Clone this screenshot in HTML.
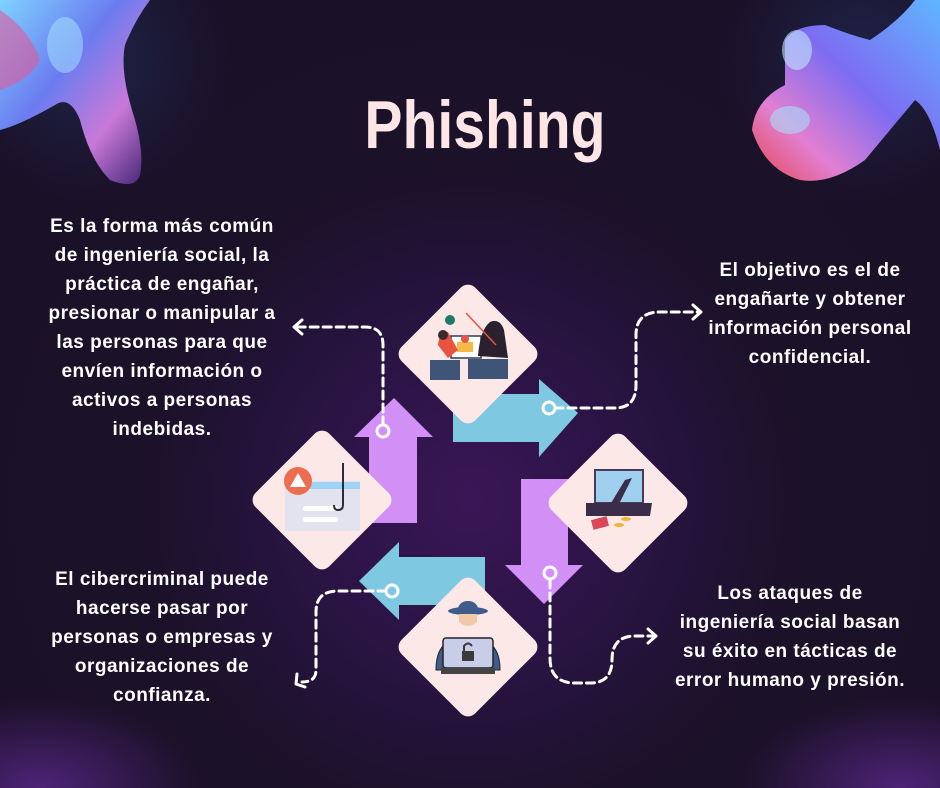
<!DOCTYPE html>
<html style="width:940px;height:788px;overflow:hidden"><head><meta charset="utf-8"><style>
html,body{margin:0;padding:0}
body{width:940px;height:788px;overflow:hidden;position:relative;font-family:"Liberation Sans",sans-serif;
background:
radial-gradient(ellipse 160px 90px at 40px 788px,rgba(90,40,140,.8),rgba(90,40,140,0)),
radial-gradient(ellipse 160px 90px at 900px 788px,rgba(90,40,140,.8),rgba(90,40,140,0)),
radial-gradient(circle 140px at 90px 60px,rgba(31,43,85,.7),rgba(31,43,85,0)),
radial-gradient(circle 140px at 860px 60px,rgba(31,43,85,.7),rgba(31,43,85,0)),
radial-gradient(circle at 470px 500px,#3a1656 0,#2a1444 160px,#1b1128 330px,#1a1027 100%);}
.t{position:absolute;color:#fff;font-weight:bold;font-size:19px;letter-spacing:0.5px;line-height:29px;text-align:center;white-space:nowrap}
h1{position:absolute;left:0;width:970px;top:86px;margin:0;text-align:center;color:#ffe6e6;font-size:68px;font-weight:bold;transform:scaleX(.84);letter-spacing:0}
</style></head><body>

<svg width="940" height="788" style="position:absolute;left:0;top:0">
<defs>
<linearGradient id="b1" x1="0" y1="0" x2="1" y2="1"><stop offset="0" stop-color="#7fd2ff"/><stop offset=".4" stop-color="#6b7cf0"/><stop offset=".7" stop-color="#c979d8"/><stop offset="1" stop-color="#3a2070"/></linearGradient>
<linearGradient id="b2" x1="1" y1="0" x2="0" y2="1"><stop offset="0" stop-color="#5fb6ff"/><stop offset=".45" stop-color="#7d6cf2"/><stop offset=".75" stop-color="#e27fd2"/><stop offset="1" stop-color="#e5484f"/></linearGradient>
</defs>
<path d="M0,0 H150 Q135,20 125,45 Q120,70 132,110 Q145,150 140,175 Q135,190 110,180 Q90,160 80,120 Q70,95 55,105 Q20,125 0,130 Z" fill="url(#b1)"/>
<path d="M0,10 Q30,30 40,60 Q30,80 0,90Z" fill="#e05a9a" opacity=".6"/>
<ellipse cx="65" cy="45" rx="18" ry="28" fill="#a8e8ff" opacity=".5"/>
<path d="M940,0 V150 Q930,110 915,100 Q890,130 865,160 Q830,185 800,180 Q765,170 752,130 Q755,100 785,85 Q785,55 785,40 Q795,25 825,25 Q850,35 870,40 Q900,20 915,0Z" fill="url(#b2)"/>
<ellipse cx="797" cy="50" rx="15" ry="20" fill="#bfe8ff" opacity=".6"/>
<ellipse cx="790" cy="120" rx="20" ry="14" fill="#9ff0ff" opacity=".5"/>

<polygon points="369,523 417,523 417,437 433,437 394,398 354,437 369,437" fill="#d290f6"/>
<polygon points="453,394 539,394 539,379 578,413 539,457 539,442 453,442" fill="#7ec8e2"/>
<polygon points="521,479 568,479 568,565 583,565 544,604 505,565 521,565" fill="#d290f6"/>
<polygon points="485,557 399,557 399,542 359,581 399,620 399,605 485,605" fill="#7ec8e2"/>

<g fill="#fde8e8">
<rect x="416" y="302" width="104" height="104" rx="10" transform="rotate(45 468 354)"/>
<rect x="270" y="448" width="104" height="104" rx="10" transform="rotate(45 322 500)"/>
<rect x="566" y="451" width="104" height="104" rx="10" transform="rotate(45 618 503)"/>
<rect x="416" y="595" width="104" height="104" rx="10" transform="rotate(45 468 647)"/>
</g>

<g>
<rect x="451" y="336" width="30" height="22" fill="#fff" stroke="#2c3e57" stroke-width="1.5"/>
<rect x="457" y="342" width="16" height="10" fill="#f5b945"/>
<circle cx="465" cy="339" r="4" fill="#e85445"/>
<circle cx="450" cy="320" r="5" fill="#1b7a68"/>
<rect x="468" y="359" width="40" height="20" fill="#3f5578"/>
<rect x="430" y="360" width="30" height="20" fill="#3f5578"/>
<path d="M478,356 Q480,330 490,322 Q500,318 504,330 L508,358Z" fill="#2a2030"/>
<circle cx="494" cy="327" r="6" fill="#2a2030"/>
<path d="M438,345 Q440,330 448,332 L458,350 L448,358Z" fill="#e8523f"/>
<circle cx="443" cy="335" r="5" fill="#3a2a2a"/>
<line x1="466" y1="313" x2="496" y2="345" stroke="#e85445" stroke-width="1.5"/>
</g>
<g>
<rect x="285" y="481" width="75" height="50" fill="#e3e3ef"/>
<rect x="302" y="482" width="58" height="7" fill="#9fd4f5"/>
<rect x="303" y="506" width="35" height="5" rx="2.5" fill="#fff"/>
<rect x="303" y="517" width="35" height="5" rx="2.5" fill="#fff"/>
<circle cx="298" cy="481" r="14" fill="#ee6d50"/>
<polygon points="298,473 306,487 290,487" fill="#fff"/>
<path d="M343,463 V505 Q343,510 338,510 Q334,510 334,505" fill="none" stroke="#2c2c3a" stroke-width="2"/>
</g>
<g>
<rect x="595" y="470" width="48" height="33" fill="#9fd0f0" stroke="#4a3a5a" stroke-width="2"/>
<polygon points="586,503 652,503 650,516 586,516" fill="#3b2c4a"/>
<path d="M625,480 L632,478 L616,510 L608,508Z" fill="#3b2c4a"/>
<rect x="592" y="518" width="16" height="10" fill="#d9485a" transform="rotate(-15 600 523)"/>
<ellipse cx="626" cy="519" rx="5" ry="2" fill="#f2b533"/>
<ellipse cx="619" cy="525" rx="5" ry="2" fill="#f2b533"/>
</g>
<g>
<path d="M436,670 Q436,643 455,640 L480,640 Q500,643 500,670Z" fill="#3f5c8a" stroke="#222" stroke-width="1"/>
<ellipse cx="468" cy="611" rx="20" ry="4" fill="#3f5c8a"/>
<path d="M457,611 Q459,601 468,601 Q477,601 479,611Z" fill="#3f5c8a"/>
<path d="M459,614 H477 V622 Q468,630 459,622Z" fill="#f1c9a8"/>
<rect x="443" y="638" width="50" height="30" rx="3" fill="#c8cde8" stroke="#222" stroke-width="1.5"/>
<rect x="441" y="668" width="54" height="6" fill="#444"/>
<rect x="462" y="651" width="12" height="10" fill="#3a3a3a"/>
<path d="M464,651 V646 Q468,641 472,646" fill="none" stroke="#3a3a3a" stroke-width="2"/>
</g>

<g fill="none" stroke="#fff" stroke-width="3" stroke-dasharray="8 5" stroke-linecap="round">
<path d="M383,425 V345 Q383,327 365,327 H298"/>
<path d="M555,408 H615 Q636,408 636,385 V335 Q636,312 660,312 H698"/>
<path d="M550,580 V658 Q550,683 575,683 H590 Q612,683 612,660 Q612,636 635,636 H652"/>
<path d="M386,591 H338 Q316,591 316,612 V670 Q316,682 302,682"/>
</g>
<g fill="none" stroke="#fff" stroke-width="3" stroke-linecap="round" stroke-linejoin="round">
<path d="M302,320 L294,327 L302,334"/>
<path d="M693,305 L701,312 L693,319"/>
<path d="M648,629 L656,636 L648,643"/>
<path d="M297,674 L296,684 L305,687"/>
<circle cx="383" cy="431" r="6"/>
<circle cx="549" cy="408" r="6"/>
<circle cx="550" cy="573" r="6"/>
<circle cx="392" cy="591" r="6"/>
</g>
</svg>

<h1>Phishing</h1>

<div class="t" style="left:2px;width:320px;top:212px">Es la forma más común<br>de ingeniería social, la<br>práctica de engañar,<br>presionar o manipular a<br>las personas para que<br>envíen información o<br>activos a personas<br>indebidas.</div>
<div class="t" style="left:660px;width:300px;top:256px">El objetivo es el de<br>engañarte y obtener<br>información personal<br>confidencial.</div>
<div class="t" style="left:2px;width:320px;top:565px">El cibercriminal puede<br>hacerse pasar por<br>personas o empresas y<br>organizaciones de<br>confianza.</div>
<div class="t" style="left:640px;width:300px;top:579px">Los ataques de<br>ingeniería social basan<br>su éxito en tácticas de<br>error humano y presión.</div>
</body></html>
